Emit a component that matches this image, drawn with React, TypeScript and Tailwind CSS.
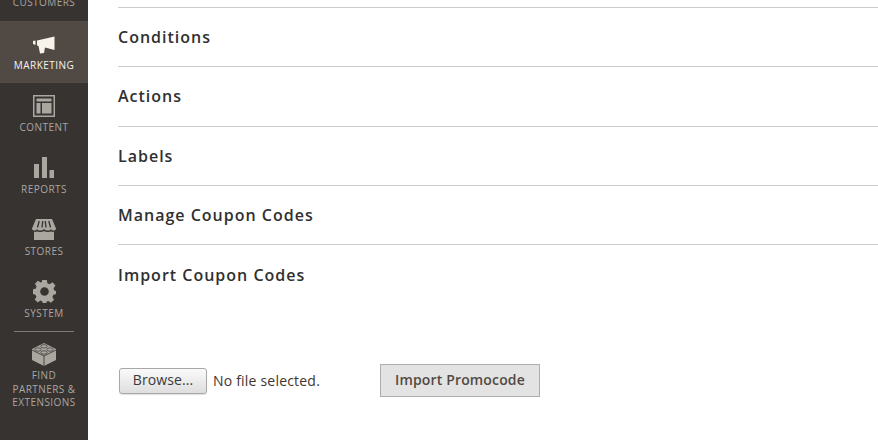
import React from 'react';

const NavLabel: React.FC<{ children: React.ReactNode; active?: boolean }> = ({ children, active }) => (
  <span className={`block text-[10px] leading-[13.5px] tracking-[0.45px] uppercase text-center ${active ? 'text-[#f7f3eb]' : 'text-[#aaa6a0]'}`}>
    {children}
  </span>
);

const MegaphoneIcon = () => (
  <svg width="22" height="18" viewBox="0 0 22 18" fill="#f7f3eb">
    <path d="M0 5 L2.500 4.500 L2.500 9 L0 8 Z" />
    <path d="M4 4.500 L21.500 0.500 L21.500 14 L12 11.500 L11 17 L7 17.500 L5.500 10 L4 9.500 Z" />
  </svg>
);

const ContentIcon = () => (
  <svg width="22" height="22" viewBox="0 0 22 22">
    <path fillRule="evenodd" fill="#aaa6a0" d="M0 0H22V22H0Z M1.500 1.500V20.500H20.500V1.500Z" />
    <rect x="3.500" y="3.500" width="15" height="3" fill="#aaa6a0" />
    <rect x="3.500" y="8" width="4" height="10.500" fill="#aaa6a0" />
    <rect x="9" y="8" width="9.500" height="10.500" fill="#aaa6a0" />
  </svg>
);

const ReportsIcon = () => (
  <svg width="20" height="21" viewBox="0 0 20 21" fill="#aaa6a0">
    <rect x="0" y="7" width="5" height="14" />
    <rect x="8" y="0" width="5" height="21" />
    <rect x="15.500" y="13" width="4.500" height="8" />
  </svg>
);

const StoresIcon = () => (
  <svg width="24" height="21" viewBox="0 0 24 21" fill="#aaa6a0">
    <path d="M4 0H20L24 9.500C24 11 22.500 11.500 21.500 11.500C20.500 11.500 19.500 11 19 10C18.500 11 17 11.500 16 11.500C15 11.500 13 11 12 10C11 11 9 11.500 8 11.500C7 11.500 5.500 11 5 10C4.500 11 3.500 11.500 2.500 11.500C1.500 11.500 0 11 0 9.500Z" />
    <path d="M2 12.800C3.500 13 4.500 12.800 5 12.300C6 13 7 13 8 13C9.500 13 11 12.800 12 12C13 12.800 14.500 13 16 13C17 13 18 13 19 12.300C19.500 12.800 20.500 13 22 12.800V21H2Z" />
    <path d="M7.200 2L5.500 8.500M10.800 2L10 8.500M13.200 2L14 8.500M16.800 2L18.500 8.500" stroke="#373330" strokeWidth="1.300" fill="none" />
  </svg>
);

const SystemIcon = () => (
  <svg width="23" height="23" viewBox="0 0 24 24" fill="#aaa6a0">
    <path fillRule="evenodd" d="M9.600 0H14.400L15 3.500L17.300 4.500L20.300 2.400L23.500 5.800L21.400 8.700L22.300 11L24 11.400V14.600L21.300 15.500L20.200 17.800L22 20.700L18.800 23.800L16 21.800L14.400 22.500L13.800 24H10.200L9.500 22.200L7.600 21.500L5 23.400L1.800 20.300L3.600 17.500L2.600 15.300L0 14.600V9.600L2.700 9L3.700 6.700L2 3.800L5.200 0.700L7.900 2.600L9.200 2.100Z M12 7.500A4.500 4.500 0 1 0 12 16.500A4.500 4.500 0 1 0 12 7.500Z" />
  </svg>
);

const BlocksIcon = () => (
  <svg width="24" height="23" viewBox="0 0 24 23">
    <path d="M12 0L24 6V17L12 23L0 17V6Z" fill="#aaa6a0" />
    <path d="M0 7L12 13L24 7M12 13V23" stroke="#373330" strokeWidth="0.800" fill="none" />
    <g fill="#aaa6a0" stroke="#373330" strokeWidth="0.700">
      <ellipse cx="12" cy="3.300" rx="3.200" ry="1.700" />
      <ellipse cx="6" cy="6.500" rx="3.200" ry="1.700" />
      <ellipse cx="18" cy="6.500" rx="3.200" ry="1.700" />
      <ellipse cx="12" cy="9.500" rx="3.200" ry="1.700" />
    </g>
  </svg>
);

const navItems = [
  { label: 'Content', icon: ContentIcon },
  { label: 'Reports', icon: ReportsIcon },
  { label: 'Stores', icon: StoresIcon },
  { label: 'System', icon: SystemIcon },
];

const sections = ['Conditions', 'Actions', 'Labels', 'Manage Coupon Codes', 'Import Coupon Codes'];

export default function App() {
  return (
    <div className="flex h-[440px] w-[878px] overflow-hidden bg-white font-['Open_Sans',sans-serif]">
      <aside className="flex w-[88px] shrink-0 flex-col items-center overflow-hidden bg-[#373330]">
        <div className="flex h-[21px] w-full shrink-0 items-end justify-center pb-[12px]">
          <NavLabel>Customers</NavLabel>
        </div>
        <div className="flex h-[62px] w-full shrink-0 flex-col items-center bg-[#514943] pt-[14px]">
          <div className="flex h-[20px] items-center">
            <MegaphoneIcon />
          </div>
          <div className="mt-[4px]">
            <NavLabel active>Marketing</NavLabel>
          </div>
        </div>
        {navItems.map(item => {
          const Icon = item.icon;
          return (
            <div key={item.label} className="flex h-[62px] w-full shrink-0 flex-col items-center pt-[11px]">
              <div className="flex h-[23px] items-center">
                <Icon />
              </div>
              <div className="mt-[4px]">
                <NavLabel>{item.label}</NavLabel>
              </div>
            </div>
          );
        })}
        <div className="h-px w-[60px] shrink-0 bg-[#7f7a74]" />
        <div className="flex w-full flex-col items-center pt-[11px]">
          <BlocksIcon />
          <div className="mt-[3px] flex flex-col items-center">
            <NavLabel>Find</NavLabel>
            <NavLabel>Partners &amp;</NavLabel>
            <NavLabel>Extensions</NavLabel>
          </div>
        </div>
      </aside>
      <main className="flex min-w-0 flex-1 flex-col pl-[30px] pt-[7px]">
        {sections.map((title, index) => (
          <div key={title} className="flex h-[59.25px] shrink-0 items-center border-t border-[#cccccc]">
            <h2 className={`text-[16px] font-semibold tracking-[1px] text-[#303030] ${index === 4 ? 'pt-[2px]' : ''}`}>{title}</h2>
          </div>
        ))}
        <div className="mt-[61px] flex items-center">
          <button className="ml-px h-[26px] w-[88px] rounded-[3px] border border-[#a8a8a8] bg-gradient-to-b from-[#fafafa] to-[#dedede] pb-[2px] text-[14px] tracking-[0.1px] text-[#3a3a3a] shadow-[0_1px_1px_rgba(0,0,0,0.12)]">
            Browse...
          </button>
          <span className="ml-[6px] w-[167px] text-[14px] tracking-[0.2px] text-[#41362f]">No file selected.</span>
          <button className="h-[33px] w-[160px] border border-[#adadad] bg-[#e3e3e3] pb-[2px] text-[14px] font-semibold tracking-[0.15px] text-[#514943]">
            Import Promocode
          </button>
        </div>
      </main>
    </div>
  );
}
